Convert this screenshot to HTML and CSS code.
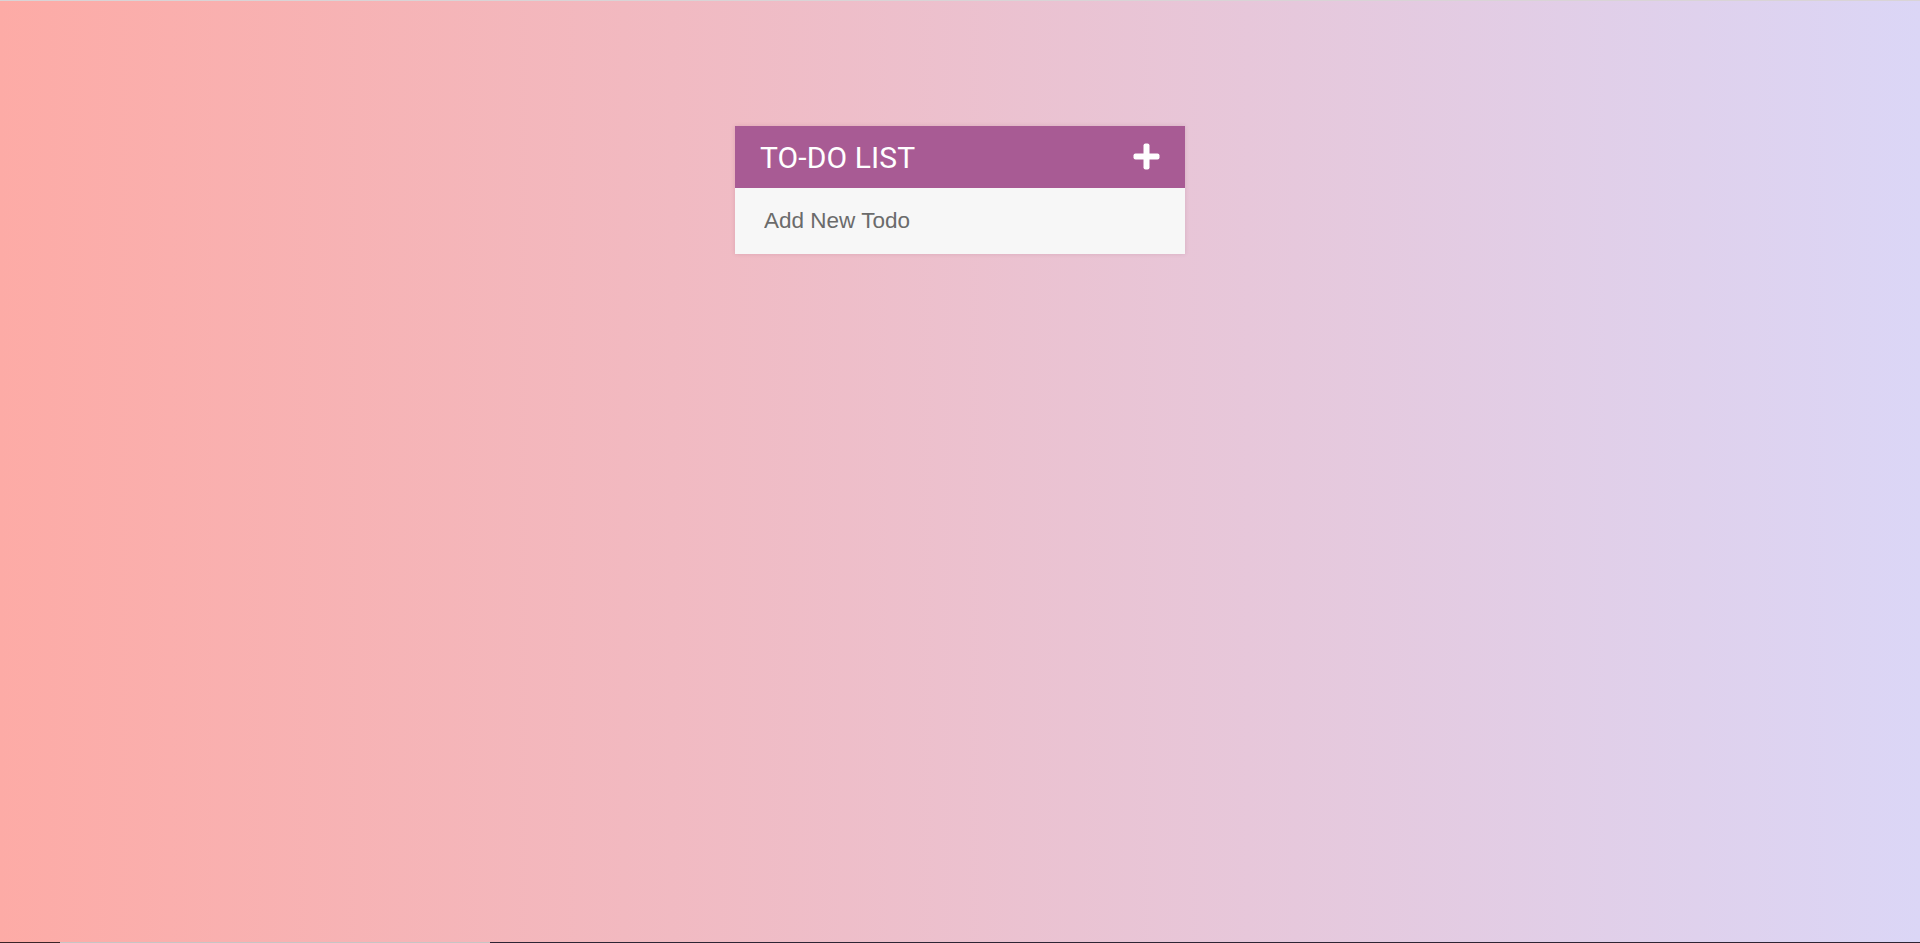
FILE: index.html
```html
<!DOCTYPE html>
<html lang="en">
<head>
<meta charset="utf-8">
<title>To-Do List</title>
<link rel="stylesheet" href="styles.css">
</head>
<body>
<div class="topline"></div>
<main class="page">
  <section class="card">
    <header class="card-head">
      <h1 class="title">TO-DO LIST</h1>
      <span class="add-btn" aria-label="Add">
        <svg width="27" height="27" viewBox="0 0 27 27"><rect x="10.5" y="0.5" width="6" height="26" rx="2" fill="#fff"/><rect x="0.5" y="10.5" width="26" height="6" rx="2" fill="#fff"/></svg>
      </span>
    </header>
    <div class="card-body">
      <input class="new-todo" type="text" placeholder="Add New Todo">
    </div>
  </section>
</main>
<div class="bottomline">
  <span class="seg dark1"></span><span class="seg light"></span><span class="seg dark2"></span>
</div>
</body>
</html>
```

FILE: styles.css
```css
html, body {
  margin: 0;
  padding: 0;
  height: 100%;
}
body {
  display: flex;
  flex-direction: column;
  height: 943px;
  overflow: hidden;
  background: linear-gradient(to right, #fdaba6, #dbd6f6);
  font-family: "Liberation Sans", Arial, sans-serif;
}
.topline {
  height: 1px;
  background: #d9d4d6;
  flex: none;
}
.page {
  flex: 1;
  display: flex;
  justify-content: center;
  align-items: flex-start;
  padding-top: 125px;
}
.card {
  width: 450px;
  box-shadow: 0 0 4px rgba(120, 60, 90, 0.18);
}
.card-head {
  height: 62px;
  background: #a85b94;
  display: flex;
  align-items: center;
  justify-content: space-between;
  padding: 0 25px 0 25px;
  box-sizing: border-box;
}
.title {
  margin: 0;
  font-family: "Roboto", sans-serif;
  font-weight: 400;
  font-size: 30px;
  letter-spacing: 0.1px;
  color: #fff;
  line-height: 1;
  padding-top: 2px;
}
.add-btn {
  display: flex;
  width: 27px;
  height: 27px;
  margin-top: -2px;
}
.card-body {
  height: 66px;
  background: #f7f7f7;
  display: flex;
  align-items: center;
  padding: 0 0 0 29px;
  box-sizing: border-box;
}
.new-todo {
  border: none;
  outline: none;
  background: transparent;
  font-family: "Liberation Sans", Arial, sans-serif;
  font-size: 22.5px;
  color: #666;
  padding: 0;
  width: 100%;
}
.new-todo::placeholder {
  color: #6b6b6b;
  opacity: 1;
}
.bottomline {
  height: 1px;
  display: flex;
  flex: none;
}
.seg { display: block; height: 1px; }
.dark1 { width: 60px; background: #3b2428; }
.light { width: 430px; background: #c8c4c4; }
.dark2 { flex: 1; background: #2e2434; }
```
